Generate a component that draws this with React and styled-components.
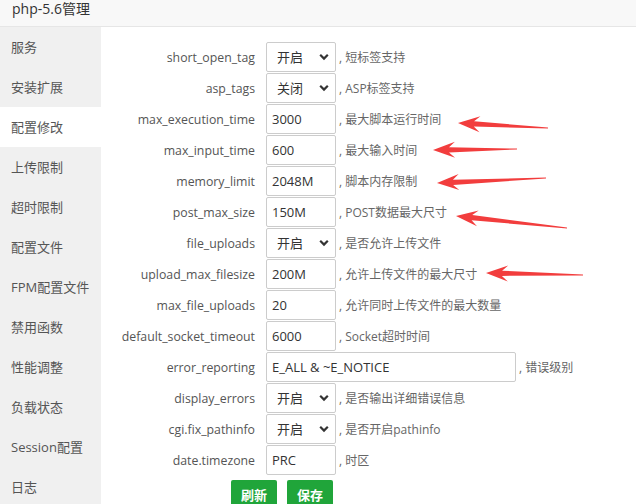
import React from 'react';
import styled, { createGlobalStyle } from 'styled-components';

const GlobalStyle = createGlobalStyle`
  html, body {
    margin: 0;
    padding: 0;
    background: #fff;
  }
  * {
    box-sizing: border-box;
  }
`;

const Page = styled.div`
  position: relative;
  width: 636px;
  height: 504px;
  overflow: hidden;
  font-family: "Open Sans", "Noto Sans CJK SC", sans-serif;
  color: #555;
  background: #fff;
`;

const Header = styled.div`
  height: 27px;
  padding: 0 12px;
  background: #f8f8f8;
  border-bottom: 1px solid #e6e6e6;
  font-size: 14px;
  line-height: 18px;
  color: #333;
  overflow: hidden;
`;

const Body = styled.div`
  display: flex;
  height: 477px;
`;

const Sidebar = styled.ul`
  width: 101px;
  margin: 0;
  padding: 0;
  list-style: none;
  background: #f0f0f0;
`;

const NavItem = styled.li`
  height: 40px;
  line-height: 40px;
  padding-left: 11px;
  font-size: 13px;
  color: #555;
  background: ${props => (props.active ? '#fff' : 'transparent')};
`;

const Main = styled.div`
  flex: 1;
  padding-top: 15px;
`;

const Row = styled.div`
  display: flex;
  align-items: center;
  height: 30px;
  margin-bottom: 1px;
`;

const Label = styled.span`
  width: 154px;
  text-align: right;
  font-size: 12.3px;
  color: #555;
  margin-right: 11px;
  white-space: nowrap;
`;

const TextInput = styled.input`
  width: ${props => props.w || 70}px;
  height: 30px;
  padding: 0 5px;
  border: 1px solid #ccc;
  border-radius: 2px;
  font-family: inherit;
  font-size: 13px;
  color: #333;
  outline: none;
`;

const SelectWrap = styled.div`
  position: relative;
  width: 70px;
  height: 30px;
`;

const Select = styled.select`
  appearance: none;
  width: 100%;
  height: 100%;
  padding: 0 0 0 10px;
  border: 1px solid #ccc;
  border-radius: 2px;
  background: #fff;
  font-family: inherit;
  font-size: 13px;
  color: #333;
  outline: none;
`;

const Chevron = styled.svg`
  position: absolute;
  right: 7px;
  top: 11px;
  pointer-events: none;
`;

const Desc = styled.span`
  margin-left: 3px;
  font-size: 12px;
  color: #666;
  white-space: nowrap;
`;

const Buttons = styled.div`
  display: flex;
  gap: 10px;
  margin: 5px 0 0 130px;
`;

const Button = styled.button`
  width: 46px;
  height: 28px;
  border: none;
  border-radius: 2px;
  background: #20a53a;
  color: #fff;
  font-family: inherit;
  font-size: 13px;
  font-weight: bold;
  padding: 0;
`;

const Overlay = styled.svg`
  position: absolute;
  left: 0;
  top: 0;
  pointer-events: none;
`;

const navItems = [
  '服务', '安装扩展', '配置修改', '上传限制', '超时限制', '配置文件',
  'FPM配置文件', '禁用函数', '性能调整', '负载状态', 'Session配置', '日志',
];

const rows = [
  { name: 'short_open_tag', type: 'select', value: '开启', desc: '短标签支持' },
  { name: 'asp_tags', type: 'select', value: '关闭', desc: 'ASP标签支持' },
  { name: 'max_execution_time', value: '3000', desc: '最大脚本运行时间' },
  { name: 'max_input_time', value: '600', desc: '最大输入时间' },
  { name: 'memory_limit', value: '2048M', desc: '脚本内存限制' },
  { name: 'post_max_size', value: '150M', desc: 'POST数据最大尺寸' },
  { name: 'file_uploads', type: 'select', value: '开启', desc: '是否允许上传文件' },
  { name: 'upload_max_filesize', value: '200M', desc: '允许上传文件的最大尺寸' },
  { name: 'max_file_uploads', value: '20', desc: '允许同时上传文件的最大数量' },
  { name: 'default_socket_timeout', value: '6000', desc: 'Socket超时时间' },
  { name: 'error_reporting', value: 'E_ALL & ~E_NOTICE', desc: '错误级别', w: 250 },
  { name: 'display_errors', type: 'select', value: '开启', desc: '是否输出详细错误信息' },
  { name: 'cgi.fix_pathinfo', type: 'select', value: '开启', desc: '是否开启pathinfo' },
  { name: 'date.timezone', value: 'PRC', desc: '时区' },
];

// red annotation arrows: tip -> tail
const arrows = [
  [458, 123, 548, 128],
  [433, 150, 517, 149],
  [437, 183, 546, 178],
  [456, 216, 567, 228],
  [486, 273, 583, 275],
];

function arrowPoints([x0, y0, x1, y1]) {
  const dx = x1 - x0;
  const dy = y1 - y0;
  const len = Math.hypot(dx, dy);
  const ux = dx / len;
  const uy = dy / len;
  const nx = -uy;
  const ny = ux;
  const head = 22;
  const join = 16;
  const p = (t, s) => `${(x0 + ux * t + nx * s).toFixed(1)},${(y0 + uy * t + ny * s).toFixed(1)}`;
  return [
    p(0, 0),
    p(head, 8),
    p(join, 2.6),
    p(len, 0.4),
    p(len, -0.4),
    p(join, -2.6),
    p(head, -8),
  ].join(' ');
}

const ChevronIcon = () => (
  <Chevron width="10" height="8" viewBox="0 0 10 8">
    <path d="M1.2 1.8 L5 5.6 L8.8 1.8" fill="none" stroke="#333" strokeWidth="2.2" />
  </Chevron>
);

export default function App() {
  return (
    <Page>
      <GlobalStyle />
      <Header>php-5.6管理</Header>
      <Body>
        <Sidebar>
          {navItems.map((item, i) => (
            <NavItem key={item} active={i === 2}>{item}</NavItem>
          ))}
        </Sidebar>
        <Main>
          {rows.map(row => (
            <Row key={row.name}>
              <Label>{row.name}</Label>
              {row.type === 'select' ? (
                <SelectWrap>
                  <Select defaultValue={row.value}>
                    <option value="开启">开启</option>
                    <option value="关闭">关闭</option>
                  </Select>
                  <ChevronIcon />
                </SelectWrap>
              ) : (
                <TextInput w={row.w} defaultValue={row.value} />
              )}
              <Desc>, {row.desc}</Desc>
            </Row>
          ))}
          <Buttons>
            <Button>刷新</Button>
            <Button>保存</Button>
          </Buttons>
        </Main>
      </Body>
      <Overlay width="636" height="504">
        {arrows.map((a, i) => (
          <polygon key={i} points={arrowPoints(a)} fill="#f23d3d" />
        ))}
      </Overlay>
    </Page>
  );
}
